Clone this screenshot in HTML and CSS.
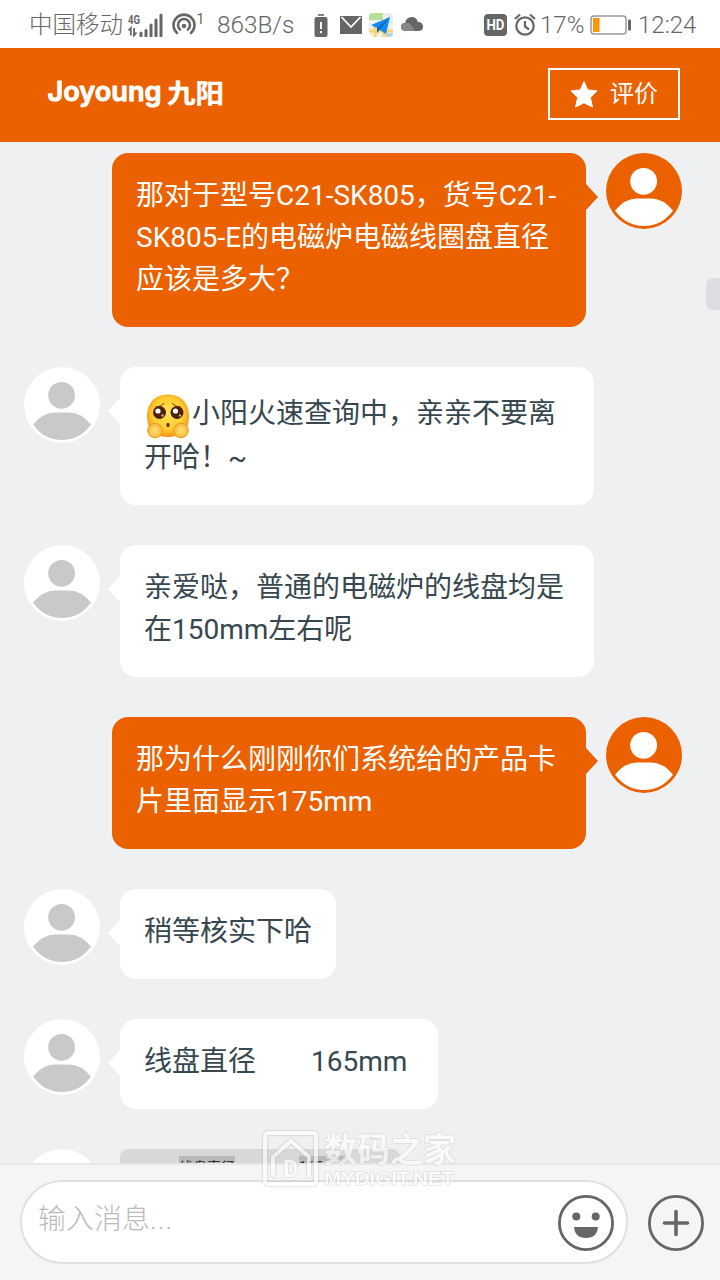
FILE: index.html
```html
<!DOCTYPE html>
<html lang="zh-CN">
<head>
<meta charset="utf-8">
<title>Joyoung 九阳</title>
<link rel="stylesheet" href="styles.css">
</head>
<body>
<svg class="defs" aria-hidden="true">
  <symbol id="person" viewBox="0 0 76 76">
    <circle cx="37.6" cy="28.3" r="13.4"/>
    <path d="M9 57.5Q19 45.5 31 45.500H45Q57 45.500 67 57.500Q56 73 38 73Q20 73 9 57.500Z"/>
  </symbol>
</svg>
<div class="screen">
  <div class="status">
    <span class="carrier">中国移动</span>
    <svg class="signal" width="36" height="24" viewBox="0 0 36 24">
      <text class="net" x="0" y="11" textLength="12" lengthAdjust="spacingAndGlyphs">4G</text>
      <path d="M0.500 17.500L2.800 15V22.500M6 15V22.500L8.500 19.500" fill="none" stroke="#666" stroke-width="1.800"/>
      <path d="M13 20v3M18 17.500v5.500M23 12v11M28 7v16M33 2v21" fill="none" stroke="#666" stroke-width="3" stroke-linecap="round"/>
    </svg>
    <svg class="hotspot" width="32" height="26" viewBox="0 0 32 26">
      <g fill="none" stroke="#666" stroke-width="2.600" stroke-linecap="round">
        <path d="M5 21A10.500 10.500 0 1 1 19 21"/><path d="M8 17.500A6 6 0 1 1 16 17.500"/>
      </g>
      <circle cx="12" cy="14" r="2.300" fill="#666"/>
      <text class="sup" x="24.500" y="12">1</text>
    </svg>
    <span class="speed">863B/s</span>
    <svg class="lowbat" width="14" height="24" viewBox="0 0 14 24"><path d="M4 2h6" stroke="#666" stroke-width="1.600"/><rect x="0.500" y="4" width="13" height="20" rx="2" fill="#666"/><path d="M7 9v7M7 18v2.300" stroke="#fff" stroke-width="2"/></svg>
    <svg class="mail" width="22" height="18" viewBox="0 0 22 18"><path d="M0 0H22V18H0Z" fill="#666"/><path d="M1.500 1L11 11L20.500 1" fill="none" stroke="#fff" stroke-width="1.800"/></svg>
    <svg class="map" width="24" height="24" viewBox="0 0 24 24"><rect width="24" height="24" rx="4" fill="#f1f1ed"/><path d="M0 4Q0 0 4 0H14V7H0Z" fill="#b8df97"/><path d="M17 0h3q4 0 4 4v6h-7z" fill="#e6ecf4"/><path d="M0 18H24M6 12V24M15 10V24" stroke="#fbd66c" stroke-width="3"/><path d="M17 20h7q0 4-4 4h-3z" fill="#b8d3ef"/><path d="M21 4L2 12L8 15L17 21Z" fill="#168bf2"/><path d="M21 4L8 15V20L11 16.500Z" fill="#086bc1"/></svg>
    <svg class="cloud" width="22" height="15" viewBox="0 0 22 15"><path d="M5 14Q0 14 0 10Q0 6 4 6Q5 0 11 0Q15 0 17 5Q22 5 22 10Q22 14 17 14Z" fill="#666"/><path d="M5 14Q0 14 0 10Q0 6 4 6Q8 5 10 8L14 14Z" fill="#888"/></svg>
    <svg class="hd" width="23" height="22" viewBox="0 0 23 22"><rect width="23" height="22" rx="4" fill="#666"/><text class="hd-text" x="2.500" y="16" textLength="18" lengthAdjust="spacingAndGlyphs">HD</text></svg>
    <svg class="alarm" width="22" height="24" viewBox="0 0 22 24"><g fill="none" stroke="#666" stroke-width="2.200"><circle cx="11" cy="13" r="8.700"/><path d="M11 8v5.500l4 3M1 6L6 1.500M21 6L16 1.500"/></g></svg>
    <span class="percent">17%</span>
    <svg class="battery" width="42" height="20" viewBox="0 0 42 20"><rect x="1" y="1" width="35" height="18" rx="3" fill="#fff" stroke="#999" stroke-width="1.500"/><rect x="3" y="3" width="6.500" height="14" fill="#ff9500"/><rect x="38" y="4.500" width="3" height="11" rx="1" fill="#666"/></svg>
    <span class="clock">12:24</span>
  </div>

  <header class="header">
    <svg class="logo" width="184" height="50" viewBox="0 0 184 50">
      <text class="logo-en" x="1.500" y="32" textLength="114" lengthAdjust="spacingAndGlyphs">Joyoung</text>
      <text class="logo-cn" x="121" y="34" textLength="57" lengthAdjust="spacingAndGlyphs">九阳</text>
    </svg>
    <div class="rate">
      <svg width="28" height="28" viewBox="0 0 28 28"><path d="M14 1.500L17.700 10L27 10.800L20.300 17.500L22.500 27L14 22.800L5.500 27L7.700 17.500L1 10.800L10.300 10Z" fill="#fff" stroke="#fff" stroke-linejoin="round"/></svg>
      <span>评价</span>
    </div>
  </header>

  <main class="chat">
    <div class="msg mine">
      <div class="bubble wide">那对于型号C21-SK805，货号C21-<br>SK805-E的电磁炉电磁线圈盘直径<br>应该是多大？</div>
      <svg class="avatar"><use href="#person"/></svg>
    </div>
    <div class="msg">
      <svg class="avatar"><use href="#person"/></svg>
      <div class="bubble wide"><div class="emoji-line"><svg class="emoji" width="48" height="48" viewBox="0 0 48 48">
        <defs><radialGradient id="face" cx=".5" cy=".45" r=".58"><stop offset="0" stop-color="#ffe45c"/><stop offset=".65" stop-color="#ffcc2e"/><stop offset="1" stop-color="#ee8a1c"/></radialGradient><radialGradient id="hand"><stop offset="0" stop-color="#ffe27a"/><stop offset="1" stop-color="#f6b737"/></radialGradient></defs>
        <path d="M24 2.500C38 2.500 45 12 45 24C45 39 37 45 24 45C11 45 3 39 3 24C3 12 10 2.500 24 2.500Z" fill="url(#face)"/>
        <path d="M11 15Q17 15 20 11M28 11Q31 15 37 15" fill="none" stroke="#8a4b10" stroke-width="1.100"/>
        <circle cx="15.500" cy="20.500" r="6.500" fill="#4b210b"/><circle cx="33" cy="20.500" r="6.500" fill="#4b210b"/>
        <circle cx="14" cy="19" r="2.600" fill="#fff"/><circle cx="31.500" cy="19" r="2.600" fill="#fff"/><circle cx="18.500" cy="23.500" r="1.200" fill="#d7a77f"/><circle cx="36" cy="23.500" r="1.200" fill="#d7a77f"/>
        <ellipse cx="24" cy="33" rx="1.600" ry="2.300" fill="#6b3209"/>
        <circle cx="11" cy="38.500" r="7.300" fill="url(#hand)" stroke="#e99a21"/><circle cx="37" cy="38.500" r="7.300" fill="url(#hand)" stroke="#e99a21"/>
      </svg><span>小阳火速查询中，亲亲不要离</span></div>开哈！~</div>
    </div>
    <div class="msg">
      <svg class="avatar"><use href="#person"/></svg>
      <div class="bubble wide">亲爱哒，普通的电磁炉的线盘均是<br>在150mm左右呢</div>
    </div>
    <div class="msg mine">
      <div class="bubble wide">那为什么刚刚你们系统给的产品卡<br>片里面显示175mm</div>
      <svg class="avatar"><use href="#person"/></svg>
    </div>
    <div class="msg">
      <svg class="avatar"><use href="#person"/></svg>
      <div class="bubble">稍等核实下哈</div>
    </div>
    <div class="msg">
      <svg class="avatar"><use href="#person"/></svg>
      <div class="bubble measure"><span>线盘直径</span><span>165mm</span></div>
    </div>
    <div class="msg">
      <svg class="avatar"><use href="#person"/></svg>
      <div class="card"><span>线盘直径</span><span>165mm</span></div>
    </div>
    <div class="scrollbar"></div>
  </main>

  <footer class="composer">
    <div class="input">
      <span>输入消息<span class="dots">...</span></span>
      <svg class="smile" width="58" height="58" viewBox="0 0 58 58"><circle cx="29" cy="29" r="26.600" fill="none" stroke="#666" stroke-width="2.800"/><circle cx="19.300" cy="22.500" r="4" fill="#666"/><circle cx="38.700" cy="22.500" r="4" fill="#666"/><path d="M17 33H41Q40 44 29 44Q18 44 17 33Z" fill="#666"/></svg>
    </div>
    <svg class="plus" width="58" height="58" viewBox="0 0 58 58"><circle cx="29" cy="29" r="26.600" fill="none" stroke="#666" stroke-width="2.800"/><path d="M17.500 29H40.500M29 17.500V40.500" stroke="#666" stroke-width="3.600" stroke-linecap="round"/></svg>
  </footer>

  <svg class="watermark" width="200" height="68" viewBox="0 0 200 68">
    <g class="wm-mark"><rect x="5" y="6" width="51" height="51" rx="3"/><path d="M13 50V30L31 14L49 30V50"/></g>
    <text class="wm-d" x="23" y="50">D</text>
    <text class="wm-cn" x="64" y="35" textLength="132" lengthAdjust="spacingAndGlyphs">数码之家</text>
    <text class="wm-en" x="64" y="58" textLength="130" lengthAdjust="spacingAndGlyphs">MYDIGIT.NET</text>
  </svg>
</div>
</body>
</html>
```

FILE: styles.css
```css
* { box-sizing: border-box; }
body { margin: 0; font-family: Roboto, "Noto Sans CJK SC", sans-serif; }
svg { flex: none; display: block; }
.defs { position: absolute; width: 0; height: 0; }
.screen { position: relative; width: 720px; height: 1280px; display: flex; flex-direction: column; overflow: hidden; background: #eef0f2; }

.status { height: 48px; flex: none; display: flex; align-items: center; background: #fff; color: #666; font-size: 24px; font-weight: 300; line-height: 48px; padding-top: 1px; white-space: nowrap; }
.status span { flex: none; }
.carrier { width: 98px; margin-left: 29px; font-size: 23.5px; }
.signal { margin-left: 1px; }
.net { font: bold 13px Roboto, sans-serif; fill: #666; }
.hotspot { margin-left: 8px; }
.sup { font: 400 14px Roboto, sans-serif; fill: #666; }
.speed { width: 78px; margin-left: 13px; font-size: 24.3px; }
.lowbat { margin-left: 19px; }
.mail { margin-left: 12px; }
.map { margin-left: 7px; }
.cloud { margin-left: 8px; }
.hd { margin-left: 61px; }
.hd-text { font: bold 14px Roboto, sans-serif; fill: #fff; }
.alarm { margin-left: 7px; }
.percent { width: 44px; margin-left: 4px; }
.battery { margin-left: 6px; }
.clock { margin-left: 6px; }

.header { height: 94px; flex: none; display: flex; align-items: center; justify-content: space-between; padding: 0 40px 2px 46px; background: #eb6100; color: #fff; }
.logo-en { font: 600 27px Inter, sans-serif; fill: #fff; stroke: #fff; stroke-width: 1px; stroke-linejoin: round; }
.logo-cn { font: bold 26px "Noto Sans CJK SC", sans-serif; fill: #fff; stroke: #fff; stroke-width: .4px; stroke-linejoin: round; }
.rate { width: 132px; height: 52px; border: 2px solid #fff; display: flex; align-items: center; padding-left: 20px; gap: 12px; font-size: 24px; line-height: 48px; }

.chat { position: relative; flex: 1; min-height: 0; overflow: hidden; padding: 11px 38px 0 24px; display: flex; flex-direction: column; gap: 40px; }
.msg { flex: none; display: flex; align-items: flex-start; gap: 20px; }
.mine { justify-content: flex-end; }
.avatar { width: 76px; height: 76px; border-radius: 50%; background: #fff; fill: #c9c9c9; }
.mine .avatar { background: #eb6100; fill: #fff; }
.bubble { position: relative; padding: 22px 24px 26px; border-radius: 16px; background: #fff; color: #37474f; font-size: 28px; line-height: 42px; white-space: nowrap; }
.wide { width: 474px; }
.mine .bubble { background: #eb6100; color: #fff; }
.bubble::before { content: ""; position: absolute; left: -12px; top: 31px; border: 13px solid transparent; border-left: 0; border-right: 12px solid #fff; }
.mine .bubble::before { left: auto; right: -12px; border-right: 0; border-left: 12px solid #eb6100; }
.emoji-line { display: flex; align-items: center; height: 48px; }
.emoji { margin-top: 5px; }
.emoji-line span { padding-top: 2px; }
.measure { width: 318px; display: flex; gap: 55px; }
.card { width: 280px; height: 100px; border-radius: 8px; background: #d8d8d8; color: #333; font-size: 14px; line-height: 22px; padding: 7px 0 0 59px; display: flex; align-items: flex-start; gap: 64px; }
.card span { background: #b9b9b9; height: 22px; }
.scrollbar { position: absolute; right: 0; top: 136px; width: 14px; height: 32px; border-radius: 7px 0 0 7px; background: #dcdee1; }

.composer { height: 117px; flex: none; display: flex; align-items: flex-start; padding: 15px 15px 0 20px; gap: 19px; border-top: 2px solid #e6e7e9; background: #f5f5f5; }
.input { width: 608px; height: 84px; border: 2px solid #e0e0e0; border-radius: 42px; background: #fff; display: flex; align-items: center; justify-content: space-between; padding: 0 11px 0 16px; color: #bbb; font-size: 28px; font-weight: 300; }
.input > span { padding-bottom: 10px; }
.dots { letter-spacing: 1px; }
.smile { margin-top: 2px; }
.plus { margin-top: 14px; }

.watermark { position: absolute; left: 260px; top: 1127px; opacity: .65; }
.watermark text { fill: #fff; stroke: #d0d0d0; stroke-width: 1.5px; paint-order: stroke; stroke-linejoin: round; }
.wm-mark { fill: none; stroke: #fff; stroke-width: 4px; filter: drop-shadow(0 0 1px #999); }
.watermark .wm-d { font: bold 24px Roboto, sans-serif; }
.watermark .wm-cn { font: bold 34px "Noto Sans CJK SC", sans-serif; }
.watermark .wm-en { font: bold 18px "Liberation Sans", sans-serif; }
```
